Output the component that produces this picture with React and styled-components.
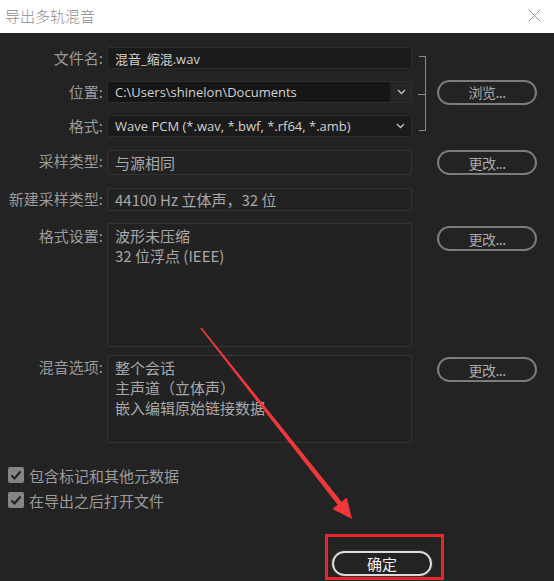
import React from "react";
import styled, { createGlobalStyle } from "styled-components";

const GlobalStyle = createGlobalStyle`
  html, body {
    margin: 0;
    padding: 0;
    background: #ffffff;
  }
  * {
    box-sizing: border-box;
  }
`;

const Dialog = styled.div`
  position: relative;
  width: 554px;
  height: 581px;
  display: flex;
  flex-direction: column;
  overflow: hidden;
  font-family: "Open Sans", "Noto Sans CJK SC", sans-serif;
`;

const TitleBar = styled.div`
  height: 33px;
  flex: none;
  background: #ffffff;
  display: flex;
  align-items: center;
  justify-content: space-between;
  padding: 0 13px 2px 5px;
`;

const Title = styled.span`
  font-family: "Noto Sans CJK SC", sans-serif;
  font-size: 15px;
  font-weight: 300;
  color: #8c8c8c;
`;

const Body = styled.div`
  flex: 1;
  background: #232323;
  padding-top: 14px;
  display: flex;
  flex-direction: column;
`;

const TopGroup = styled.div`
  display: grid;
  grid-template-columns: 107px 305px 25px 100px;
  grid-template-rows: repeat(3, 22px);
  row-gap: 12px;
`;

const FormRow = styled.div`
  display: grid;
  grid-template-columns: 107px 305px 25px 100px;
  margin-top: ${({ $mt }) => $mt}px;
  height: ${({ $h }) => $h}px;
`;

const Label = styled.div`
  grid-column: 1;
  text-align: right;
  padding-right: 4px;
  font-family: "Noto Sans CJK SC", sans-serif;
  font-size: 15px;
  line-height: 22px;
  color: #9b9b9b;
  white-space: nowrap;
  padding-top: ${({ $pt }) => $pt || 0}px;
`;

const Field = styled.div`
  grid-column: 2;
  display: flex;
  align-items: center;
  background: #1b1b1b;
  border: 1px solid #2e2e2e;
  border-radius: 2px;
  color: #d2d2d2;
  font-size: 13px;
  padding-left: 7px;
  white-space: nowrap;
  overflow: hidden;
`;

const ComboField = styled.div`
  grid-column: 2;
  display: flex;
  border: 1px solid #2e2e2e;
  border-radius: 2px;
  overflow: hidden;
`;

const ComboText = styled.div`
  flex: 1;
  display: flex;
  align-items: center;
  background: ${({ $dark }) => ($dark ? "#161616" : "#1b1b1b")};
  color: #d2d2d2;
  font-size: 13px;
  padding-left: 7px;
  white-space: nowrap;
`;

const ComboArrow = styled.div`
  width: 21px;
  flex: none;
  display: flex;
  align-items: center;
  justify-content: center;
  background: ${({ $split }) => ($split ? "#262626" : "#1b1b1b")};
  border-left: ${({ $split }) => ($split ? "2px solid #232323" : "none")};
`;

const ReadBox = styled.div`
  grid-column: 2;
  background: #222222;
  border: 1px solid #343434;
  border-radius: 2px;
  color: #a8a8a8;
  font-family: "Noto Sans CJK SC", sans-serif;
  font-size: 15px;
  padding: ${({ $multi }) => ($multi ? "2px 0 0 7px" : "0 0 0 7px")};
  display: ${({ $multi }) => ($multi ? "block" : "flex")};
  align-items: center;
`;

const Line = styled.div`
  line-height: 20px;
  white-space: nowrap;
`;

const Bracket = styled.div`
  grid-column: 3;
  grid-row: 1 / 4;
  margin: 9px 11px 6px 7px;
  border-top: 1px solid #8a8a8a;
  border-right: 1px solid #8a8a8a;
  border-bottom: 1px solid #8a8a8a;
  position: relative;

  &::after {
    content: "";
    position: absolute;
    left: -1px;
    right: 0;
    top: 50%;
    border-top: 1px solid #8a8a8a;
  }
`;

const PillButton = styled.div`
  grid-column: 4;
  grid-row: ${({ $row }) => $row || "auto"};
  align-self: ${({ $align }) => $align || "start"};
  margin-top: ${({ $mt }) => $mt || 0}px;
  height: 25px;
  border: 2px solid #7c7c7c;
  border-radius: 13px;
  display: flex;
  align-items: center;
  justify-content: center;
  font-family: "Noto Sans CJK SC", sans-serif;
  font-size: 14px;
  color: #a9a9a9;
  letter-spacing: -0.5px;
`;

const Checks = styled.div`
  margin-top: 23px;
  padding-left: 8px;
  display: flex;
  flex-direction: column;
  gap: 7px;
`;

const CheckRow = styled.div`
  height: 18px;
  display: flex;
  align-items: center;
  gap: 5px;
  font-family: "Noto Sans CJK SC", sans-serif;
  font-size: 15px;
  color: #9c9c9c;
`;

const Box = styled.span`
  width: 16px;
  height: 16px;
  border-radius: 2px;
  background: #858585;
  display: flex;
  align-items: center;
  justify-content: center;
`;

const Footer = styled.div`
  margin-top: 25px;
  padding-left: 325px;
  flex: 1;
  display: flex;
`;

const Highlight = styled.div`
  width: 119px;
  height: 46px;
  border: 3px solid #e8262c;
  padding: 14px 9px 0 4px;
`;

const ConfirmButton = styled.div`
  height: 25px;
  border: 2px solid #dcdcdc;
  border-radius: 13px;
  display: flex;
  align-items: center;
  justify-content: center;
  font-family: "Noto Sans CJK SC", sans-serif;
  font-size: 15px;
  color: #f0f0f0;
  box-shadow: 0 0 2px rgba(255, 255, 255, 0.3);
`;

const Overlay = styled.svg`
  position: absolute;
  left: 0;
  top: 0;
  pointer-events: none;
`;

const Chevron = () => (
  <svg width="9" height="6" viewBox="0 0 9 6">
    <polyline points="1,1 4.5,4.5 8,1" fill="none" stroke="#c4c4c4" strokeWidth="1.3" />
  </svg>
);

const Check = () => (
  <svg width="14" height="14" viewBox="0 0 14 14">
    <polyline points="2.5,7.5 5.5,10.5 11.5,3.5" fill="none" stroke="#1f1f1f" strokeWidth="2" />
  </svg>
);

const App = () => {
  return (
    <Dialog>
      <GlobalStyle />
      <TitleBar>
        <Title>导出多轨混音</Title>
        <svg width="13" height="13" viewBox="0 0 13 13">
          <path d="M0.5 0.5 L12.5 12.5 M12.5 0.5 L0.5 12.5" stroke="#9a9a9a" strokeWidth="1" />
        </svg>
      </TitleBar>
      <Body>
        <TopGroup>
          <Label style={{ gridRow: 1 }}>文件名:</Label>
          <Field style={{ gridRow: 1 }}>混音_缩混.wav</Field>
          <Label style={{ gridRow: 2 }}>位置:</Label>
          <ComboField style={{ gridRow: 2 }}>
            <ComboText $dark>C:\Users\shinelon\Documents</ComboText>
            <ComboArrow $split>
              <Chevron />
            </ComboArrow>
          </ComboField>
          <Label style={{ gridRow: 3 }}>格式:</Label>
          <ComboField style={{ gridRow: 3 }}>
            <ComboText>Wave PCM (*.wav, *.bwf, *.rf64, *.amb)</ComboText>
            <ComboArrow>
              <Chevron />
            </ComboArrow>
          </ComboField>
          <Bracket />
          <PillButton $row={2} $align="center">
            浏览...
          </PillButton>
        </TopGroup>

        <FormRow $mt={13} $h={23}>
          <Label>采样类型:</Label>
          <ReadBox>与源相同</ReadBox>
          <PillButton $mt={0}>更改...</PillButton>
        </FormRow>

        <FormRow $mt={15} $h={23}>
          <Label>新建采样类型:</Label>
          <ReadBox>44100 Hz 立体声，32 位</ReadBox>
        </FormRow>

        <FormRow $mt={12} $h={124}>
          <Label $pt={2}>格式设置:</Label>
          <ReadBox $multi>
            <Line>波形未压缩</Line>
            <Line>32 位浮点 (IEEE)</Line>
          </ReadBox>
          <PillButton $mt={3}>更改...</PillButton>
        </FormRow>

        <FormRow $mt={8} $h={88}>
          <Label $pt={1}>混音选项:</Label>
          <ReadBox $multi>
            <Line>整个会话</Line>
            <Line>主声道（立体声）</Line>
            <Line>嵌入编辑原始链接数据</Line>
          </ReadBox>
          <PillButton $mt={2}>更改...</PillButton>
        </FormRow>

        <Checks>
          <CheckRow>
            <Box>
              <Check />
            </Box>
            包含标记和其他元数据
          </CheckRow>
          <CheckRow>
            <Box>
              <Check />
            </Box>
            在导出之后打开文件
          </CheckRow>
        </Checks>

        <Footer>
          <Highlight>
            <ConfirmButton>确定</ConfirmButton>
          </Highlight>
        </Footer>
      </Body>

      <Overlay width="554" height="581" viewBox="0 0 554 581">
        <polygon
          points="201.6,327.5 341.6,501.8 346.7,497.7 352,519 332.5,508.9 337.6,504.8 200.4,328.5"
          fill="#f0383c"
        />
      </Overlay>
    </Dialog>
  );
};

export default App;
